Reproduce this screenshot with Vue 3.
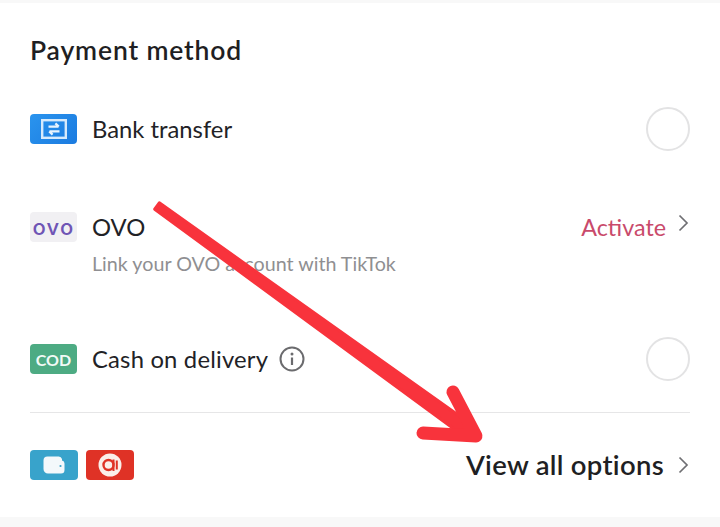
<script setup>
const arrowShaft = 'M154.7 209.2 L159.3 202.8 L474 426.3 L466 437.7 Z'
const arrowHead = 'M453 392 L476 436 L423 433'
</script>

<template>
  <div class="page">
    <section class="card">
      <h2 class="title">Payment method</h2>

      <div class="row row--bank">
        <div class="badge badge--bank">
          <svg width="26" height="20" viewBox="0 0 26 20" fill="none">
            <rect x="1.2" y="1.2" width="23.6" height="17.6" stroke="#d6eafc" stroke-width="2.4" />
            <path d="M7.5 7.6H17.5M14.4 4.4L17.8 7.6M18.5 12.4H8.5M11.6 15.6L8.2 12.4" stroke="#e8f3fd" stroke-width="2.2" />
          </svg>
        </div>
        <span class="label">Bank transfer</span>
        <span class="radio"></span>
      </div>

      <div class="row-ovo">
        <div class="row-ovo__main">
          <div class="badge badge--ovo">ovo</div>
          <span class="label">OVO</span>
          <span class="activate">Activate</span>
          <svg class="chevron chevron--up" width="11" height="18" viewBox="0 0 11 18" fill="none">
            <path d="M1.5 1.5L9 9L1.5 16.5" stroke="#6f6f73" stroke-width="1.7" />
          </svg>
        </div>
        <p class="hint">Link your OVO account with TikTok</p>
      </div>

      <div class="row row--cod">
        <div class="badge badge--cod">COD</div>
        <span class="label label--cod">Cash on delivery</span>
        <svg class="info" width="26" height="26" viewBox="0 0 26 26" fill="none">
          <circle cx="13" cy="13" r="11.5" stroke="#6b6b6e" stroke-width="2" />
          <circle cx="13" cy="8" r="1.5" fill="#6b6b6e" />
          <path d="M13 11.5V19" stroke="#6b6b6e" stroke-width="2.2" />
        </svg>
        <span class="radio"></span>
      </div>

      <div class="footer">
        <div class="badge badge--wallet">
          <svg width="22" height="18" viewBox="0 0 22 18">
            <path d="M4.5 0.5H15.5A3.5 3.5 0 0 1 19 3V4.5A3 3 0 0 1 21.5 7.5V14A3.5 3.5 0 0 1 18 17.5H5A4.5 4.5 0 0 1 0.5 13V4.5A4 4 0 0 1 4.5 0.5Z" fill="#f3f8fb" />
            <circle cx="17.5" cy="10" r="1.1" fill="#38a3cb" />
          </svg>
        </div>
        <div class="badge badge--red">
          <svg width="24" height="24" viewBox="0 0 24 24" fill="none">
            <circle cx="12" cy="12" r="11.5" fill="#fbeeea" />
            <circle cx="10.5" cy="12" r="5" stroke="#df3226" stroke-width="2.4" />
            <path d="M15.5 6.5V18M18.8 7.5V16.5" stroke="#df3226" stroke-width="2" />
          </svg>
        </div>
        <span class="view-all">View all options</span>
        <svg class="chevron" width="11" height="18" viewBox="0 0 11 18" fill="none">
          <path d="M1.5 1.5L9 9L1.5 16.5" stroke="#6f6f73" stroke-width="1.7" />
        </svg>
      </div>
    </section>

    <!-- hand drawn annotation on top of the screenshot -->
    <svg class="arrow" width="720" height="527" viewBox="0 0 720 527" fill="none">
      <path :d="arrowShaft" fill="#f8333c" stroke="#f8333c" stroke-width="3" stroke-linejoin="round" />
      <path :d="arrowHead" stroke="#f8333c" stroke-width="13" stroke-linecap="round" stroke-linejoin="round" />
    </svg>
  </div>
</template>

<style scoped>
.page {
  position: relative;
  width: 720px;
  height: 527px;
  overflow: hidden;
  background: #f8f8f8;
  padding-top: 3px;
  box-sizing: border-box;
  font-family: Lato, "Open Sans", sans-serif;
  color: #222226;
}

.card {
  height: 514px;
  box-sizing: border-box;
  background: #fff;
  padding: 32px 30px 0;
}

.title {
  margin: 0;
  font-size: 26.5px;
  line-height: 30px;
  font-weight: 600;
  letter-spacing: 0.85px;
  color: #1f1f23;
}

.row {
  display: flex;
  align-items: center;
  height: 44px;
}

.row--bank {
  margin-top: 42px;
}

.row--cod {
  margin-top: 59px;
}

.badge {
  flex: none;
  width: 47px;
  height: 30px;
  border-radius: 4px;
  display: flex;
  align-items: center;
  justify-content: center;
  margin-right: 15px;
}

.badge--bank {
  background: linear-gradient(135deg, #2a94ee, #1b7be0);
}

.badge--ovo {
  background: #f1f0f3;
  color: #6f55b5;
  font-family: Inter, sans-serif;
  font-size: 22px;
  line-height: 24px;
  font-weight: 500;
  letter-spacing: 1.2px;
}

.badge--cod {
  background: #4dab83;
  color: #f2faf6;
  font-size: 16px;
  font-weight: 700;
}

.badge--wallet {
  width: 48px;
  background: #38a3cb;
  margin-right: 8px;
}

.badge--red {
  width: 48px;
  background: #df3226;
  margin-right: 0;
}

.label {
  font-size: 23.8px;
  line-height: 30px;
}

.label--cod {
  letter-spacing: 0.2px;
}

.radio {
  flex: none;
  width: 44px;
  height: 44px;
  box-sizing: border-box;
  border: 2px solid #e3e3e4;
  border-radius: 50%;
  margin-left: auto;
}

.info {
  margin-left: 11px;
}

.row-ovo {
  margin-top: 61px;
}

.row-ovo__main {
  display: flex;
  align-items: center;
  height: 30px;
}

.activate {
  margin-left: auto;
  font-size: 23.3px;
  line-height: 30px;
  color: #c94a6b;
}

.chevron {
  flex: none;
  margin-left: 12px;
  margin-right: 1px;
}

.chevron--up {
  margin-top: -8px;
}

.hint {
  margin: 8px 0 0 62px;
  font-size: 19.7px;
  line-height: 28px;
  color: #8f8f92;
}

.footer {
  display: flex;
  align-items: center;
  height: 40px;
  margin-top: 31px;
  padding-top: 32px;
  border-top: 1px solid #e6e6e7;
}

.view-all {
  margin-left: auto;
  font-size: 27.5px;
  line-height: 30px;
  font-weight: 600;
  letter-spacing: 0.3px;
  color: #1f1f23;
}

.footer .chevron {
  margin-left: 14px;
}

.arrow {
  position: absolute;
  left: 0;
  top: 0;
  pointer-events: none;
}
</style>
